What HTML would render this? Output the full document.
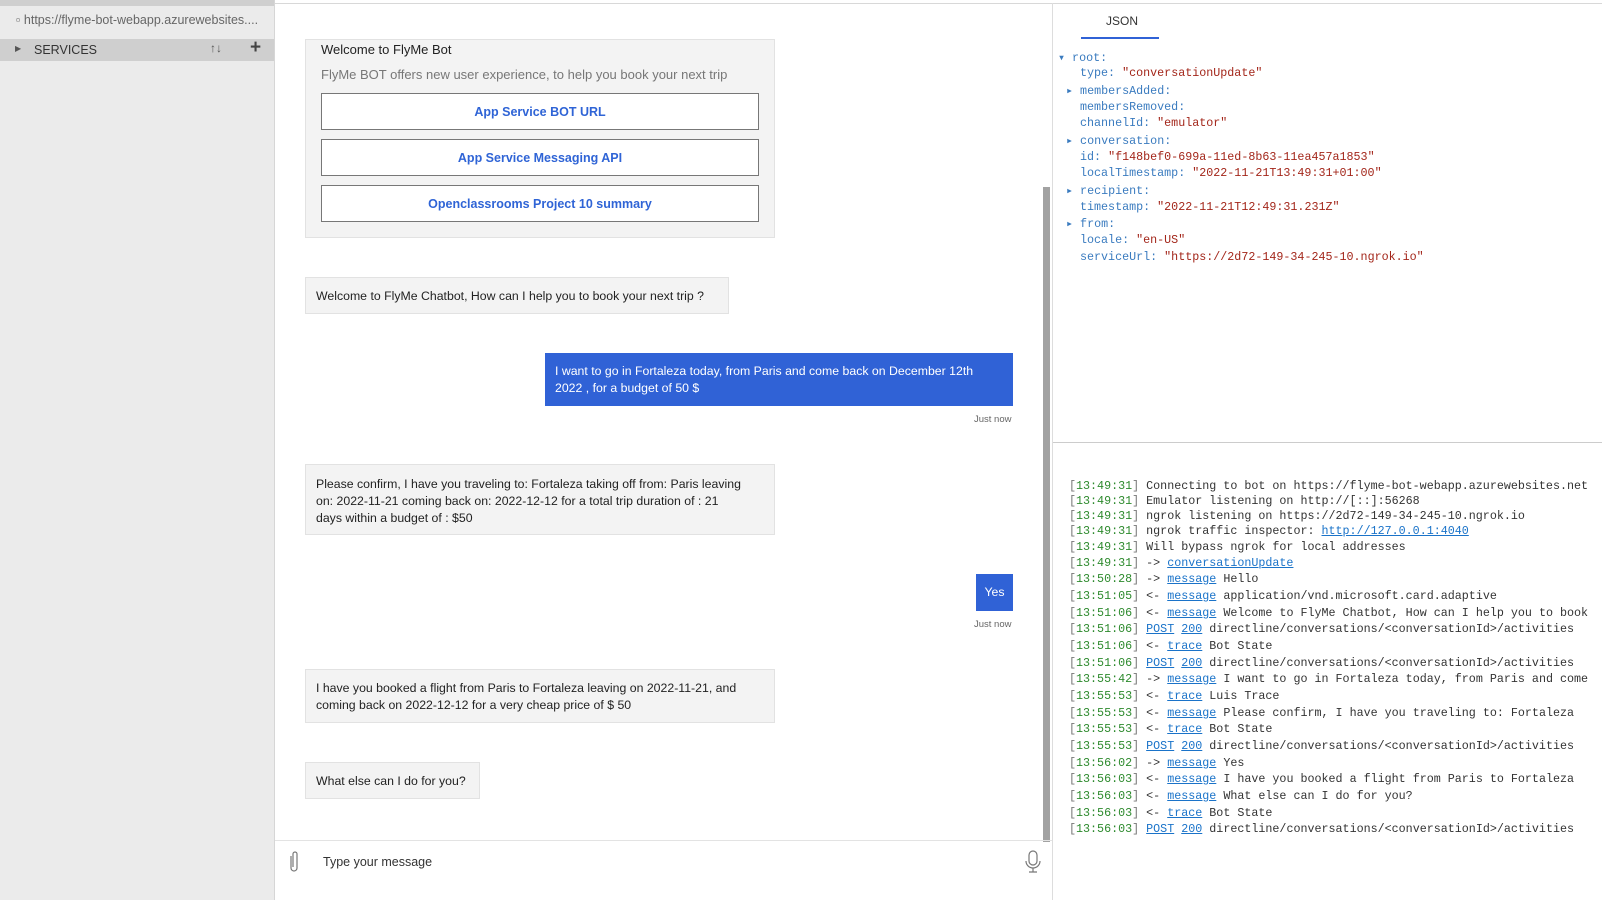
<!DOCTYPE html>
<html><head><meta charset="utf-8"><style>
*{margin:0;padding:0;box-sizing:border-box}
body{width:1602px;height:900px;overflow:hidden;background:#fff;font-family:"Liberation Sans",sans-serif;position:relative}
.a{position:absolute}
.side{left:0;top:0;width:275px;height:900px;background:#ebebeb;border-right:1px solid #d6d6d6}
.chat{font-size:12.3px;color:#222}
.bub{position:absolute;background:#f3f3f3;border:1px solid #e2e2e2;padding:0 10px;line-height:17px;white-space:nowrap}
.btn{position:absolute;left:321px;width:438px;height:37px;border:1px solid #777;background:#fff;color:#2f64d6;font-weight:bold;font-size:12.5px;text-align:center;line-height:36px}
.user{position:absolute;background:#3062d6;color:#fff;line-height:17px;padding:0 10px}
.ts{position:absolute;font-size:9.5px;color:#666}
.mono{font-family:"Liberation Mono",monospace;font-size:11.7px;white-space:pre}
.j{position:absolute;left:1080px;color:#3a7bbf}
.j b{font-weight:normal;color:#a3261a}
.l{position:absolute;left:1069px;color:#333}
.g{color:#2d8a2d}.k{color:#777}
.u{color:#1a73c9;text-decoration:underline}
</style></head><body>
<div class="a side"></div>
<div class="a" style="left:0;top:0;width:274px;height:6px;background:#cfcfcf"></div>
<div class="a" style="left:16px;top:13px;font-size:12.5px;color:#666;white-space:nowrap">▫ https://flyme-bot-webapp.azurewebsites....</div>
<div class="a" style="left:0;top:39px;width:274px;height:22px;background:#cfcfcf"></div>
<div class="a" style="left:15px;top:44px;font-size:8px;color:#555">▶</div>
<div class="a" style="left:34px;top:43px;font-size:12.5px;color:#333">SERVICES</div>
<div class="a" style="left:210px;top:41px;font-size:12px;color:#555">↑↓</div>
<div class="a" style="left:250px;top:37px;font-size:19px;font-weight:bold;color:#444">+</div>
<div class="a" style="left:275px;top:3px;width:1327px;height:1px;background:#d8d8d8"></div>
<div class="a" style="left:1052px;top:3px;width:1px;height:897px;background:#ddd"></div>
<div class="a" style="left:1043px;top:187px;width:7px;height:655px;background:#a2a2a2"></div>

<div class="chat">
<div class="bub" style="left:305px;top:39px;width:470px;height:199px"></div>
<div class="a" style="left:321px;top:42px;font-size:13px;color:#222">Welcome to FlyMe Bot</div>
<div class="a" style="left:321px;top:67px;font-size:13px;color:#777">FlyMe BOT offers new user experience, to help you book your next trip</div>
<div class="btn" style="top:93px">App Service BOT URL</div>
<div class="btn" style="top:139px">App Service Messaging API</div>
<div class="btn" style="top:185px">Openclassrooms Project 10 summary</div>

<div class="bub" style="left:305px;top:277px;width:424px;height:37px;line-height:36px">Welcome to FlyMe Chatbot, How can I help you to book your next trip ?</div>
<div class="user" style="left:545px;top:353px;width:468px;height:53px;padding-top:10px">I want to go in Fortaleza today, from Paris and come back on December 12th<br>2022 , for a budget of 50 $</div>
<div class="ts" style="left:974px;top:414px">Just now</div>
<div class="bub" style="left:305px;top:464px;width:470px;height:71px;padding-top:11px">Please confirm, I have you traveling to: Fortaleza taking off from: Paris leaving<br>on: 2022-11-21 coming back on: 2022-12-12 for a total trip duration of : 21<br>days within a budget of : $50</div>
<div class="user" style="left:976px;top:574px;width:37px;height:37px;line-height:37px;padding:0;text-align:center">Yes</div>
<div class="ts" style="left:974px;top:619px">Just now</div>
<div class="bub" style="left:305px;top:669px;width:470px;height:54px;padding-top:10px">I have you booked a flight from Paris to Fortaleza leaving on 2022-11-21, and<br>coming back on 2022-12-12 for a very cheap price of $ 50</div>
<div class="bub" style="left:305px;top:762px;width:175px;height:37px;line-height:36px">What else can I do for you?</div>
</div>

<div class="a" style="left:275px;top:840px;width:777px;height:1px;background:#e3e3e3"></div>
<svg class="a" style="left:287px;top:850px" width="14" height="24" viewBox="0 0 14 24"><path d="M4 6v12a3 3 0 0 0 6 0V4a2 2 0 0 0-4 0v13" fill="none" stroke="#777" stroke-width="1.2"/></svg>
<div class="a" style="left:323px;top:855px;font-size:12.5px;color:#333">Type your message</div>
<svg class="a" style="left:1024px;top:849px" width="18" height="26" viewBox="0 0 18 26"><rect x="5" y="2" width="8" height="14" rx="4" fill="none" stroke="#777" stroke-width="1.2"/><path d="M2 12a7 7 0 0 0 14 0M9 19v4M5 23h8" fill="none" stroke="#777" stroke-width="1.2"/></svg>

<div class="a" style="left:1106px;top:14px;font-size:12px;color:#333">JSON</div>
<div class="a" style="left:1081px;top:37px;width:78px;height:2px;background:#3062d6"></div>
<div class="mono">
<div class="a" style="left:1058px;top:50px;color:#3a7bbf">▾ root:</div>
<div class="j" style="top:66px">type: <b>"conversationUpdate"</b></div>
<div class="j" style="top:83px;left:1066px">▸ membersAdded:</div>
<div class="j" style="top:100px">membersRemoved:</div>
<div class="j" style="top:116px">channelId: <b>"emulator"</b></div>
<div class="j" style="top:133px;left:1066px">▸ conversation:</div>
<div class="j" style="top:150px">id: <b>"f148bef0-699a-11ed-8b63-11ea457a1853"</b></div>
<div class="j" style="top:166px">localTimestamp: <b>"2022-11-21T13:49:31+01:00"</b></div>
<div class="j" style="top:183px;left:1066px">▸ recipient:</div>
<div class="j" style="top:200px">timestamp: <b>"2022-11-21T12:49:31.231Z"</b></div>
<div class="j" style="top:216px;left:1066px">▸ from:</div>
<div class="j" style="top:233px">locale: <b>"en-US"</b></div>
<div class="j" style="top:250px">serviceUrl: <b>"https://2d72-149-34-245-10.ngrok.io"</b></div>
</div>
<div class="a" style="left:1053px;top:442px;width:549px;height:1px;background:#ccc"></div>
<div class="mono">
<div class="l" style="top:479px"><span class="k">[</span><span class="g">13:49:31</span><span class="k">]</span> Connecting to bot on https://flyme-bot-webapp.azurewebsites.net</div>
<div class="l" style="top:494px"><span class="k">[</span><span class="g">13:49:31</span><span class="k">]</span> Emulator listening on http://[::]:56268</div>
<div class="l" style="top:509px"><span class="k">[</span><span class="g">13:49:31</span><span class="k">]</span> ngrok listening on https://2d72-149-34-245-10.ngrok.io</div>
<div class="l" style="top:524px"><span class="k">[</span><span class="g">13:49:31</span><span class="k">]</span> ngrok traffic inspector: <span class="u">http://127.0.0.1:4040</span></div>
<div class="l" style="top:540px"><span class="k">[</span><span class="g">13:49:31</span><span class="k">]</span> Will bypass ngrok for local addresses</div>
<div class="l" style="top:556px"><span class="k">[</span><span class="g">13:49:31</span><span class="k">]</span> -&gt; <span class="u">conversationUpdate</span></div>
<div class="l" style="top:572px"><span class="k">[</span><span class="g">13:50:28</span><span class="k">]</span> -&gt; <span class="u">message</span> Hello</div>
<div class="l" style="top:589px"><span class="k">[</span><span class="g">13:51:05</span><span class="k">]</span> &lt;- <span class="u">message</span> application/vnd.microsoft.card.adaptive</div>
<div class="l" style="top:606px"><span class="k">[</span><span class="g">13:51:06</span><span class="k">]</span> &lt;- <span class="u">message</span> Welcome to FlyMe Chatbot, How can I help you to book</div>
<div class="l" style="top:622px"><span class="k">[</span><span class="g">13:51:06</span><span class="k">]</span> <span class="u">POST</span> <span class="u">200</span> directline/conversations/&lt;conversationId&gt;/activities</div>
<div class="l" style="top:639px"><span class="k">[</span><span class="g">13:51:06</span><span class="k">]</span> &lt;- <span class="u">trace</span> Bot State</div>
<div class="l" style="top:656px"><span class="k">[</span><span class="g">13:51:06</span><span class="k">]</span> <span class="u">POST</span> <span class="u">200</span> directline/conversations/&lt;conversationId&gt;/activities</div>
<div class="l" style="top:672px"><span class="k">[</span><span class="g">13:55:42</span><span class="k">]</span> -&gt; <span class="u">message</span> I want to go in Fortaleza today, from Paris and come</div>
<div class="l" style="top:689px"><span class="k">[</span><span class="g">13:55:53</span><span class="k">]</span> &lt;- <span class="u">trace</span> Luis Trace</div>
<div class="l" style="top:706px"><span class="k">[</span><span class="g">13:55:53</span><span class="k">]</span> &lt;- <span class="u">message</span> Please confirm, I have you traveling to: Fortaleza</div>
<div class="l" style="top:722px"><span class="k">[</span><span class="g">13:55:53</span><span class="k">]</span> &lt;- <span class="u">trace</span> Bot State</div>
<div class="l" style="top:739px"><span class="k">[</span><span class="g">13:55:53</span><span class="k">]</span> <span class="u">POST</span> <span class="u">200</span> directline/conversations/&lt;conversationId&gt;/activities</div>
<div class="l" style="top:756px"><span class="k">[</span><span class="g">13:56:02</span><span class="k">]</span> -&gt; <span class="u">message</span> Yes</div>
<div class="l" style="top:772px"><span class="k">[</span><span class="g">13:56:03</span><span class="k">]</span> &lt;- <span class="u">message</span> I have you booked a flight from Paris to Fortaleza</div>
<div class="l" style="top:789px"><span class="k">[</span><span class="g">13:56:03</span><span class="k">]</span> &lt;- <span class="u">message</span> What else can I do for you?</div>
<div class="l" style="top:806px"><span class="k">[</span><span class="g">13:56:03</span><span class="k">]</span> &lt;- <span class="u">trace</span> Bot State</div>
<div class="l" style="top:822px"><span class="k">[</span><span class="g">13:56:03</span><span class="k">]</span> <span class="u">POST</span> <span class="u">200</span> directline/conversations/&lt;conversationId&gt;/activities</div>
</div>
</body></html>
